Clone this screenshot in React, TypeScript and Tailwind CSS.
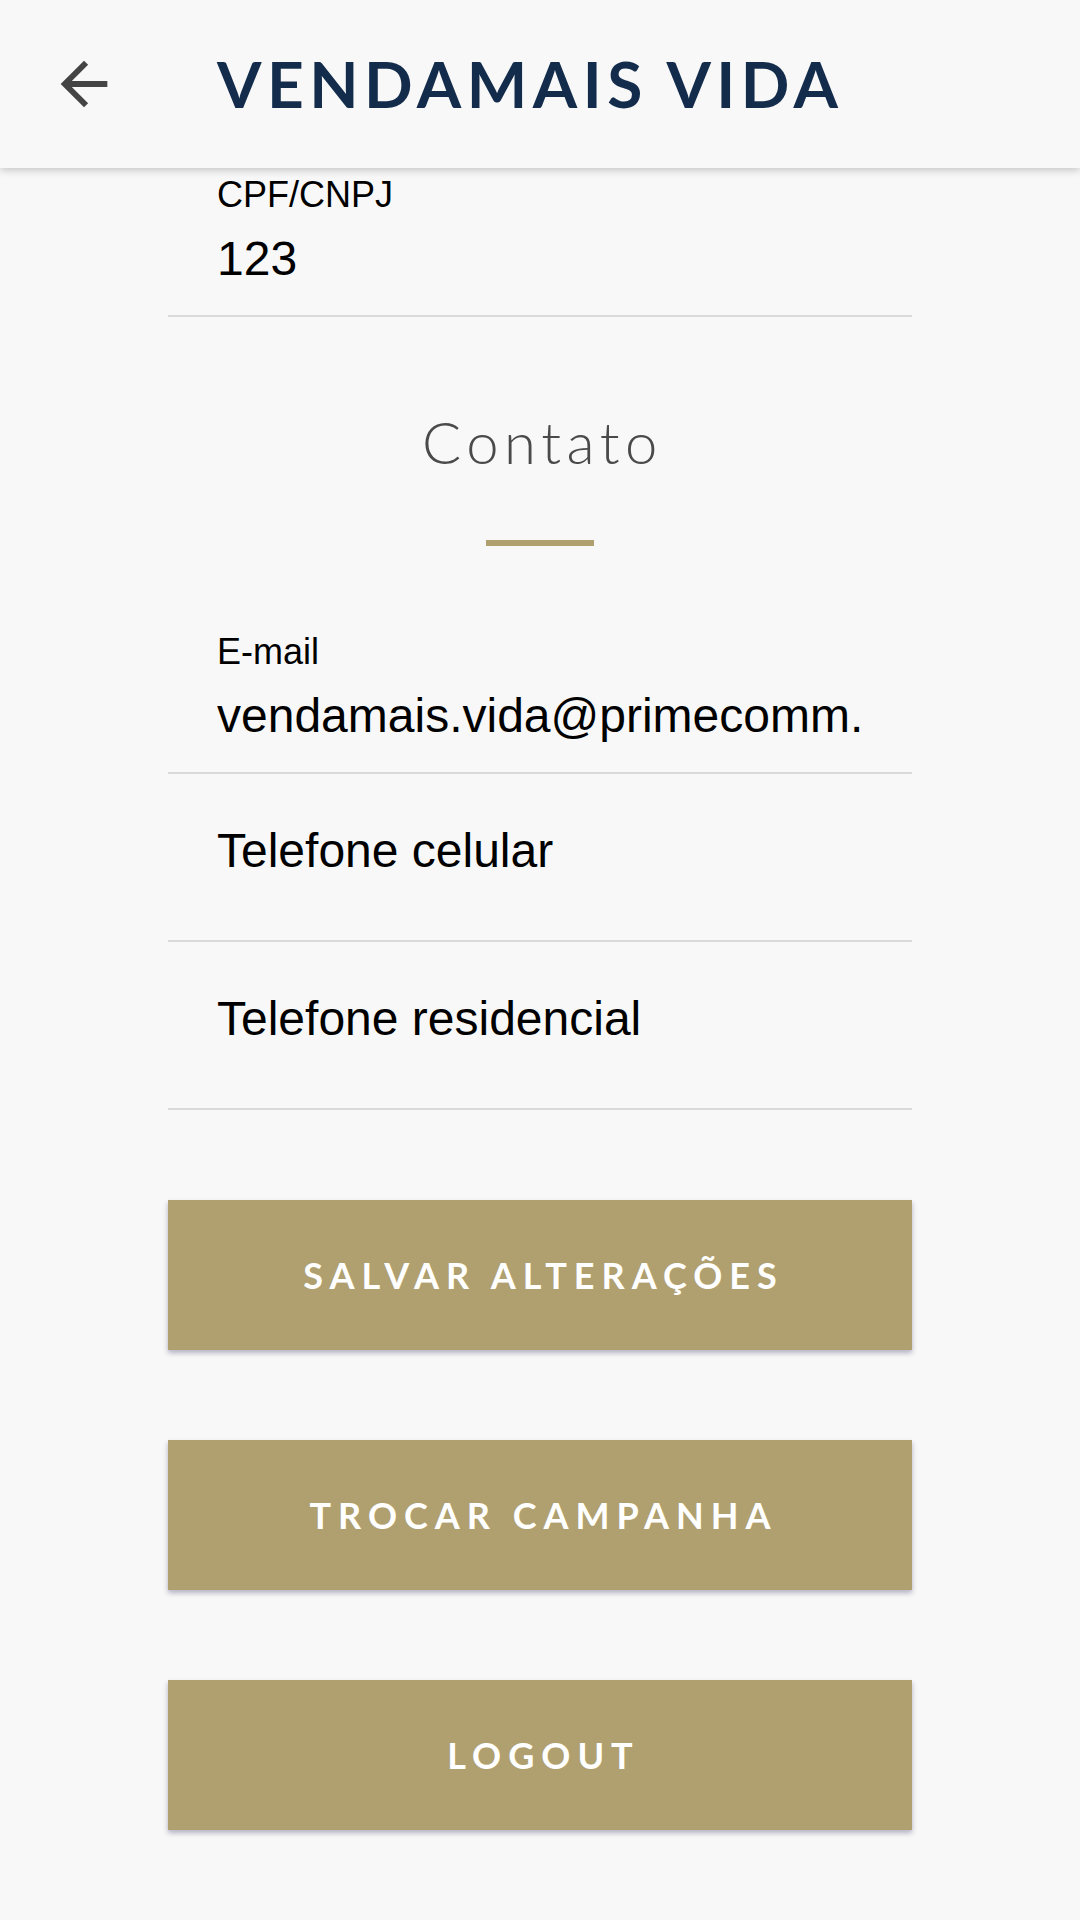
import React from "react";

const sans = { fontFamily: '"Liberation Sans", Arial, sans-serif' };

function Field({
  label,
  value,
  first,
}: {
  label?: string;
  value: string;
  first?: boolean;
}) {
  const h = first ? "h-[149px]" : "h-[168px]";
  if (label) {
    return (
      <div
        className={`${h} box-border border-b-2 border-[#d9d9d9] px-[49px] ${first ? "pt-[9px]" : "pt-[28px]"} text-black`}
        style={sans}
      >
        <div className="text-[36px] leading-[36px]">{label}</div>
        <div className="mt-[16px] overflow-hidden whitespace-nowrap pt-[6px] pb-[10px] text-[48px] leading-[48px]">
          {value}
        </div>
      </div>
    );
  }
  return (
    <div
      className={`${h} box-border border-b-2 border-[#d9d9d9] px-[49px] pt-[53px] text-black`}
      style={sans}
    >
      <div className="whitespace-nowrap text-[48px] leading-[48px]">{value}</div>
    </div>
  );
}

function GoldButton({ children }: { children: React.ReactNode }) {
  return (
    <button
      className="flex h-[150px] w-full items-center justify-center bg-[#b0a06f] pl-[7px] text-[36px] leading-none font-bold tracking-[7px] text-white shadow-[0_3px_5px_rgba(50,45,90,0.35)]"
      style={{ fontFamily: 'Lato, "Open Sans", sans-serif' }}
    >
      {children}
    </button>
  );
}

export default function App() {
  return (
    <div className="min-h-screen bg-[#f8f8f8]">
      <header className="relative z-10 flex h-[168px] items-center bg-[#f8f8f8] pl-[49px] shadow-[0_2px_8px_rgba(0,0,0,0.22)]">
        <svg width="70" height="70" viewBox="0 0 24 24" fill="#444444">
          <path d="M20 11H7.83l5.59-5.59L12 4l-8 8 8 8 1.41-1.41L7.83 13H20v-2z" />
        </svg>
        <h1
          className="ml-[98px] text-[64px] leading-none font-bold tracking-[5.5px] text-[#132c4b]"
          style={{ fontFamily: 'Lato, "Open Sans", sans-serif' }}
        >
          VENDAMAIS VIDA
        </h1>
      </header>

      <main className="mx-auto w-[744px]">
        <Field first label="CPF/CNPJ" value="123" />

        <div className="flex flex-col items-center pt-[96px] pb-[60px]">
          <h2
            className="pl-[5px] text-[58px] leading-none font-light tracking-[5.5px] text-[#4a4a4a]"
            style={{ fontFamily: 'Lato, "Open Sans", sans-serif' }}
          >
            Contato
          </h2>
          <div className="mt-[69px] h-[6px] w-[108px] bg-[#b0a06f]" />
        </div>

        <Field label="E-mail" value="vendamais.vida@primecomm.com.br" />
        <Field value="Telefone celular" />
        <Field value="Telefone residencial" />

        <div className="flex flex-col gap-[90px] pt-[90px] pb-[90px]">
          <GoldButton>SALVAR ALTERAÇÕES</GoldButton>
          <GoldButton>TROCAR CAMPANHA</GoldButton>
          <GoldButton>LOGOUT</GoldButton>
        </div>
      </main>
    </div>
  );
}
